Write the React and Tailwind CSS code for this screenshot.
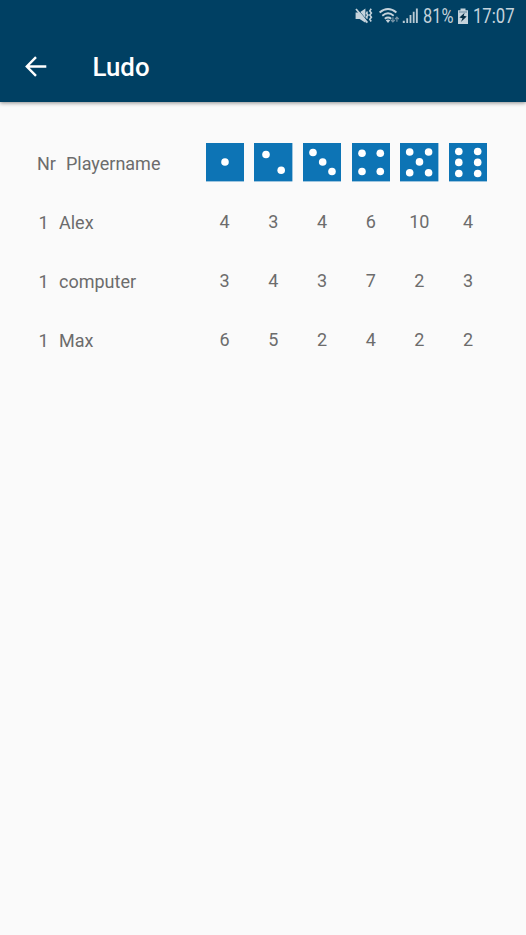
const DICE = [
  [[19, 19]],
  [[12, 11.5], [27.2, 27.2]],
  [[10, 9.5], [19.7, 19], [29, 28.5]],
  [[10, 10.3], [28.3, 10.3], [10, 28.5], [28.3, 28.5]],
  [[9.7, 9], [28.6, 9], [19.5, 18.9], [9.7, 29.7], [28.6, 29.7]],
  [[9.8, 8.5], [28.7, 8.5], [9.8, 19.4], [28.7, 19.4], [9.8, 30.5], [28.7, 30.5]],
];

const PLAYERS = [
  { nr: 1, name: "Alex", counts: [4, 3, 4, 6, 10, 4] },
  { nr: 1, name: "computer", counts: [3, 4, 3, 7, 2, 3] },
  { nr: 1, name: "Max", counts: [6, 5, 2, 4, 2, 2] },
];

function Die({ dots }) {
  return (
    <svg width="38.4" height="38.4" viewBox="0 0 38.4 38.4">
      <rect width="38.4" height="38.4" fill="#0d74b5" />
      {dots.map(([x, y]) => (
        <circle key={`${x}-${y}`} cx={x} cy={y} r="3.8" fill="#fff" />
      ))}
    </svg>
  );
}

function MutedVibrate() {
  return (
    <svg className="ml-[355px] shrink-0" width="18" height="16" viewBox="0 0 18 16">
      <path d="M.6 4.4h4L10.4 .4v14.4L4.6 11h-4z" fill="#c5d3dc" />
      <path d="M2.6 1.2 12 12.4" stroke="#004063" strokeWidth=".8" />
      <path d="M1 1 12.4 14.6" stroke="#c5d3dc" strokeWidth="1.7" />
      <path d="M12.4 3.5l-.9 1.8 1.4 1.8-1.4 1.8.9 1.8M16.2 .8l-1.4 2.1 1.6 2.1-1.6 2.1 1.6 2.1-1.6 2.1 1.4 2.2" fill="none" stroke="#c5d3dc" strokeWidth="1.6" />
    </svg>
  );
}

function Wifi() {
  return (
    <svg className="ml-[6px] shrink-0 overflow-visible" width="21" height="16" viewBox="0 0 21 16">
      <g fill="none" stroke="#c5d3dc" strokeWidth="1.9">
        <path d="M.6 4.4Q9 -2.6 17.4 4.4" />
        <path d="M3.3 7.7Q9 3 14.7 7.7" />
        <path d="M5.8 10.8Q9 8.3 12.2 10.8" />
      </g>
      <path d="M6.8 12.3Q9 10.8 11.2 12.3L9 14.9z" fill="#c5d3dc" />
      <path d="M13.9 9.2v4.7M12 12l1.9 1.9 1.9-1.9M17.9 13.8V9.2M16 11.1l1.9-1.9 1.9 1.9" fill="none" stroke="#7593a6" strokeWidth="1.2" />
    </svg>
  );
}

function Signal() {
  return (
    <svg className="ml-[2px] shrink-0" width="17" height="16" viewBox="0 0 17 16">
      <path d="M.8 12.8h2V15H.8zM4.3 10.2h1.8V15H4.3zM7.6 7h1.8v8H7.6zM10.8 3.8h1.8V15h-1.8zM13.9 .6h1.9V15h-1.9z" fill="#b9cad4" />
    </svg>
  );
}

function Battery() {
  return (
    <svg className="shrink-0" width="12" height="17" viewBox="0 0 12 17">
      <path d="M3.5 .6h5v1.7H11v13.8H1V2.3h2.5z" fill="#c5d3dc" />
      <path d="M2 4h8" stroke="#7896a9" strokeWidth="1.2" />
      <path d="M7.6 4.8L2.4 9.5l3.1.8-1.6 3.6 5.8-5.4-3-.7z" fill="#062d43" />
    </svg>
  );
}

export default function App() {
  return (
    <div className="flex h-[935px] w-[526px] flex-col overflow-hidden bg-[#fafafa] font-[Roboto,sans-serif]">
      <header className="h-[101.5px] shrink-0 bg-[#004063] shadow-[0_1px_4px_rgba(0,0,0,0.45)]">
        <div className="flex h-8 items-center text-[19.5px] leading-8 text-[#c5d3dc]">
          <MutedVibrate />
          <Wifi />
          <Signal />
          <span className="ml-[4px] w-[34px] shrink-0 origin-left scale-x-[0.84] whitespace-nowrap pt-0.5">81%</span>
          <Battery />
          <span className="ml-[4px] w-[44px] shrink-0 origin-left scale-x-[0.855] whitespace-nowrap pt-0.5">17:07</span>
        </div>
        <div className="flex h-[70px] items-center pl-6 text-white">
          <svg className="shrink-0" width="24" height="24" viewBox="0 0 24 24">
            <path d="M22.3 11.5H3.6M12 2.2L2.8 11.5l9.2 9.3" fill="none" stroke="currentColor" strokeWidth="2.4" />
          </svg>
          <h1 className="ml-[44.5px] text-[25.8px] font-medium leading-8">Ludo</h1>
        </div>
      </header>
      <main className="pt-[31.5px] text-[18px] leading-6 text-[#6c6c6c]">
        <div className="grid h-[59px] grid-cols-[37px_163.5px_repeat(6,48.7px)] items-center">
          <div className="col-start-2 flex gap-2.5 pt-0.5">
            <span>Nr</span>
            <span>Playername</span>
          </div>
          {DICE.map((dots, i) => (
            <div key={i} className="flex justify-center">
              <Die dots={dots} />
            </div>
          ))}
        </div>
        {PLAYERS.map((player) => (
          <div key={player.name} className="grid h-[59px] grid-cols-[38.4px_20.6px_141.3px_repeat(6,48.7px)] items-center">
            <span className="col-start-2 pt-0.5">{player.nr}</span>
            <span className="pt-0.5">{player.name}</span>
            {player.counts.map((count, i) => (
              <span key={i} className="pt-px text-center">{count}</span>
            ))}
          </div>
        ))}
      </main>
    </div>
  );
}
